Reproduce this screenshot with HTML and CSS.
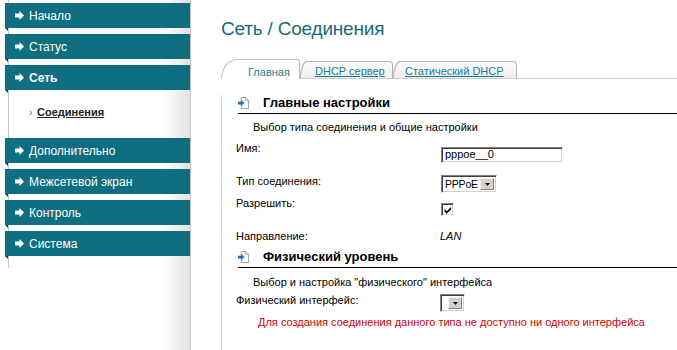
FILE: index.html
```html
<!DOCTYPE html>
<html lang="ru">
<head>
<meta charset="utf-8">
<title>Сеть / Соединения</title>
<link rel="stylesheet" href="styles.css">
</head>
<body>
<div class="page">
  <nav class="sidebar">
    <div class="menu">
      <div class="item"><svg class="arr" viewBox="0 0 9 9"><path d="M0 2.5h4.5V0L9 4.5 4.5 9V6.5H0z" fill="#fff"/></svg><span>Начало</span></div>
      <div class="item"><svg class="arr" viewBox="0 0 9 9"><path d="M0 2.5h4.5V0L9 4.5 4.5 9V6.5H0z" fill="#fff"/></svg><span>Статус</span></div>
      <div class="item active"><svg class="arr" viewBox="0 0 9 9"><path d="M0 2.5h4.5V0L9 4.5 4.5 9V6.5H0z" fill="#fff"/></svg><span>Сеть</span></div>
      <div class="sub"><span class="chev">›</span><span class="sublink">Соединения</span></div>
      <div class="item"><svg class="arr" viewBox="0 0 9 9"><path d="M0 2.5h4.5V0L9 4.5 4.5 9V6.5H0z" fill="#fff"/></svg><span>Дополнительно</span></div>
      <div class="item"><svg class="arr" viewBox="0 0 9 9"><path d="M0 2.5h4.5V0L9 4.5 4.5 9V6.5H0z" fill="#fff"/></svg><span>Межсетевой экран</span></div>
      <div class="item"><svg class="arr" viewBox="0 0 9 9"><path d="M0 2.5h4.5V0L9 4.5 4.5 9V6.5H0z" fill="#fff"/></svg><span>Контроль</span></div>
      <div class="item"><svg class="arr" viewBox="0 0 9 9"><path d="M0 2.5h4.5V0L9 4.5 4.5 9V6.5H0z" fill="#fff"/></svg><span>Система</span></div>
    </div>
  </nav>
  <main class="main">
    <h1 class="title">Сеть / Соединения</h1>
    <div class="tabs">
      <div class="tab tab-active">Главная</div>
      <div class="tab tab-dhcp"><span class="tlink">DHCP сервер</span></div>
      <div class="tab tab-static"><span class="tlink">Статический DHCP</span></div>
      <div class="tab-fill"></div>
    </div>
    <div class="panel">
      <div class="sec-head">
        <svg class="sec-icon" viewBox="0 0 12 13"><path d="M3.5 0.5h5l3 3v9h-8z" fill="#fff" stroke="#9a9a9a"/><path d="M8.5 0.5v3h3" fill="#e8e8e8" stroke="#9a9a9a"/><path d="M0 5h3.5V3L7 6.5 3.5 10V8H0z" fill="#1b6fc4"/></svg>
        <span>Главные настройки</span>
      </div>
      <div class="desc">Выбор типа соединения и общие настройки</div>
      <div class="row r-name"><div class="lbl">Имя:</div><div class="val"><div class="input">pppoe__0</div></div></div>
      <div class="row r-type"><div class="lbl">Тип соединения:</div><div class="val"><div class="select s-type"><span class="stext">PPPoE</span><span class="sbtn"><svg viewBox="0 0 7 4"><path d="M0 0h7L3.5 4z" fill="#000"/></svg></span></div></div></div>
      <div class="row r-enable"><div class="lbl">Разрешить:</div><div class="val"><div class="check"><svg viewBox="0 0 9 9"><path d="M0.5 3.5l2.5 2.5L8 1v2.8L3 8.6 0.5 6.2z" fill="#000"/></svg></div></div></div>
      <div class="row r-dir"><div class="lbl">Направление:</div><div class="val lan">LAN</div></div>
      <div class="sec-head">
        <svg class="sec-icon" viewBox="0 0 12 13"><path d="M3.5 0.5h5l3 3v9h-8z" fill="#fff" stroke="#9a9a9a"/><path d="M8.5 0.5v3h3" fill="#e8e8e8" stroke="#9a9a9a"/><path d="M0 5h3.5V3L7 6.5 3.5 10V8H0z" fill="#1b6fc4"/></svg>
        <span>Физический уровень</span>
      </div>
      <div class="desc desc2">Выбор и настройка "физического" интерфейса</div>
      <div class="row r-phys"><div class="lbl">Физический интерфейс:</div><div class="val"><div class="select s-phys"><span class="stext"></span><span class="sbtn"><svg viewBox="0 0 7 4"><path d="M0 0h7L3.5 4z" fill="#000"/></svg></span></div></div></div>
      <div class="error">Для создания соединения данного типа не доступно ни одного интерфейса</div>
    </div>
  </main>
</div>
</body>
</html>
```

FILE: styles.css
```css
html, body {
  margin: 0;
  padding: 0;
  background: #fff;
}
body {
  font-family: "Liberation Sans", Arial, sans-serif;
  font-size: 11px;
  color: #000;
  overflow: hidden;
}
.page {
  display: flex;
  height: 350px;
}

/* ---------- sidebar ---------- */
.sidebar {
  width: 185px;
  margin-left: 5px;
  border-right: 1px solid #c4c4c4;
  background: linear-gradient(to right, #fff 0, #fff 158px, #e2e2e2 185px);
  flex-shrink: 0;
}
.menu {
  padding: 3px 0 6px;
  background: linear-gradient(#c9c9c9, #c9c9c9) no-repeat 3px 0 / 1px 100%;
}
.item {
  position: relative;
  display: flex;
  align-items: center;
  height: 25px;
  margin-bottom: 6px;
  background: #0f6e7f;
  color: #fff;
  font-size: 12px;
}
.item::after {
  content: "";
  position: absolute;
  left: 0;
  top: 25px;
  width: 0;
  height: 0;
  border-top: 3px solid #083e47;
  border-left: 3px solid transparent;
}
.item.active span {
  font-weight: bold;
}
.arr {
  width: 9px;
  height: 9px;
  margin-left: 10px;
  margin-right: 5px;
}
.sub {
  display: flex;
  align-items: center;
  height: 32px;
  padding-bottom: 4px;
  margin-bottom: 6px;
  padding-left: 24px;
}
.chev {
  color: #666;
  font-size: 10px;
  width: 8px;
}
.sublink {
  font-weight: bold;
  text-decoration: underline;
  color: #222;
  font-size: 11px;
}

/* ---------- main ---------- */
.main {
  margin-left: 30px;
  flex: 1;
  min-width: 0;
}
.title {
  margin: 18px 0 0;
  font-weight: normal;
  font-size: 19px;
  line-height: 22px;
  letter-spacing: -0.2px;
  color: #1b6a79;
}
.tabs {
  display: flex;
  align-items: flex-end;
  height: 20px;
  margin-top: 19px;
}
.tab {
  box-sizing: border-box;
  font-size: 11px;
  line-height: 13px;
  color: #1c7d90;
  white-space: nowrap;
}
.tab-active {
  width: 79px;
  height: 20px;
  padding: 6px 0 0 26px;
  background: #fff;
  border: 1px solid #bdbdbd;
  border-bottom: none;
  border-top-left-radius: 16px 20px;
  border-top-right-radius: 3px;
}
.tab-dhcp, .tab-static {
  height: 18px;
  padding-top: 3px;
  background: linear-gradient(#fdfdfd, #ededed);
  border: 1px solid #b3b3b3;
  border-bottom-color: #cfcfcf;
  border-left: none;
  border-top-left-radius: 7px 17px;
  border-top-right-radius: 4px;
  box-shadow: inset 1px 0 0 #b3b3b3;
}
.tab-dhcp {
  width: 93px;
  padding-left: 15px;
}
.tab-static {
  width: 124px;
  padding-left: 12px;
}
.tlink {
  text-decoration: underline;
}
.tab-fill {
  flex: 1;
  height: 20px;
  box-sizing: border-box;
  border-bottom: 1px solid #cfcfcf;
}
.panel {
  border-left: 1px solid #d6d6d6;
  height: 271px;
  padding-left: 16px;
  box-sizing: border-box;
}
.sec-head {
  display: flex;
  align-items: center;
  padding: 1px 0 3px;
  line-height: 14px;
  font-size: 13px;
  font-weight: bold;
  border-bottom: 1px solid #000;
}
.panel > .sec-head:first-child {
  margin-top: 16px;
}
.sec-icon {
  width: 11px;
  height: 12px;
  margin-right: 14px;
}
.desc {
  margin-top: 6.5px;
  padding-left: 15px;
  line-height: 13px;
}
.desc2 {
  margin-top: 7.5px;
}
.row {
  display: grid;
  grid-template-columns: 204px 1fr;
  margin-left: -2px;
  line-height: 13px;
  box-sizing: border-box;
}
.r-name { margin-top: 8px; height: 33px; }
.r-type { height: 22.5px; }
.r-enable { height: 33px; }
.r-dir { height: 19px; }
.r-phys { margin-top: 5px; height: 22px; }

.input {
  box-sizing: border-box;
  width: 122px;
  height: 16px;
  margin-top: 5.5px;
  margin-left: 1px;
  padding-left: 3px;
  line-height: 13px;
  border: 1px solid;
  border-color: #808080 #fff #fff #808080;
  box-shadow: inset 1px 1px 0 #404040, inset -1px -1px 0 #d4d0c8;
  background: #fff;
}
.select {
  box-sizing: border-box;
  display: flex;
  align-items: stretch;
  height: 18px;
  border: 1px solid;
  border-color: #808080 #fff #fff #808080;
  box-shadow: inset 1px 1px 0 #404040, inset -1px -1px 0 #d4d0c8;
  background: #fff;
  padding: 2px;
}
.s-type {
  width: 56px;
  margin-left: 1px;
  margin-top: 0.5px;
}
.s-phys {
  width: 25px;
  margin-top: 0.5px;
}
.stext {
  flex: 1;
  min-width: 0;
  padding-left: 1px;
  line-height: 12px;
  font-size: 10.5px;
  letter-spacing: -0.2px;
  overflow: hidden;
}
.sbtn {
  width: 14px;
  flex-shrink: 0;
  box-sizing: border-box;
  background: #d4d0c8;
  border: 1px solid;
  border-color: #f4f4f4 #808080 #808080 #f4f4f4;
  display: flex;
  align-items: center;
  justify-content: center;
}
.sbtn svg {
  width: 5px;
  height: 3px;
}
.check {
  box-sizing: border-box;
  width: 13px;
  height: 13px;
  margin-top: 6px;
  margin-left: 1px;
  border: 1px solid;
  border-color: #808080 #fff #fff #808080;
  box-shadow: inset 1px 1px 0 #404040, inset -1px -1px 0 #d4d0c8;
  background: #fff;
  display: flex;
  align-items: center;
  justify-content: center;
}
.check svg {
  width: 8px;
  height: 8px;
}
.lan {
  font-style: italic;
}
.error {
  padding-left: 20px;
  line-height: 13px;
  color: #d00000;
}
```
